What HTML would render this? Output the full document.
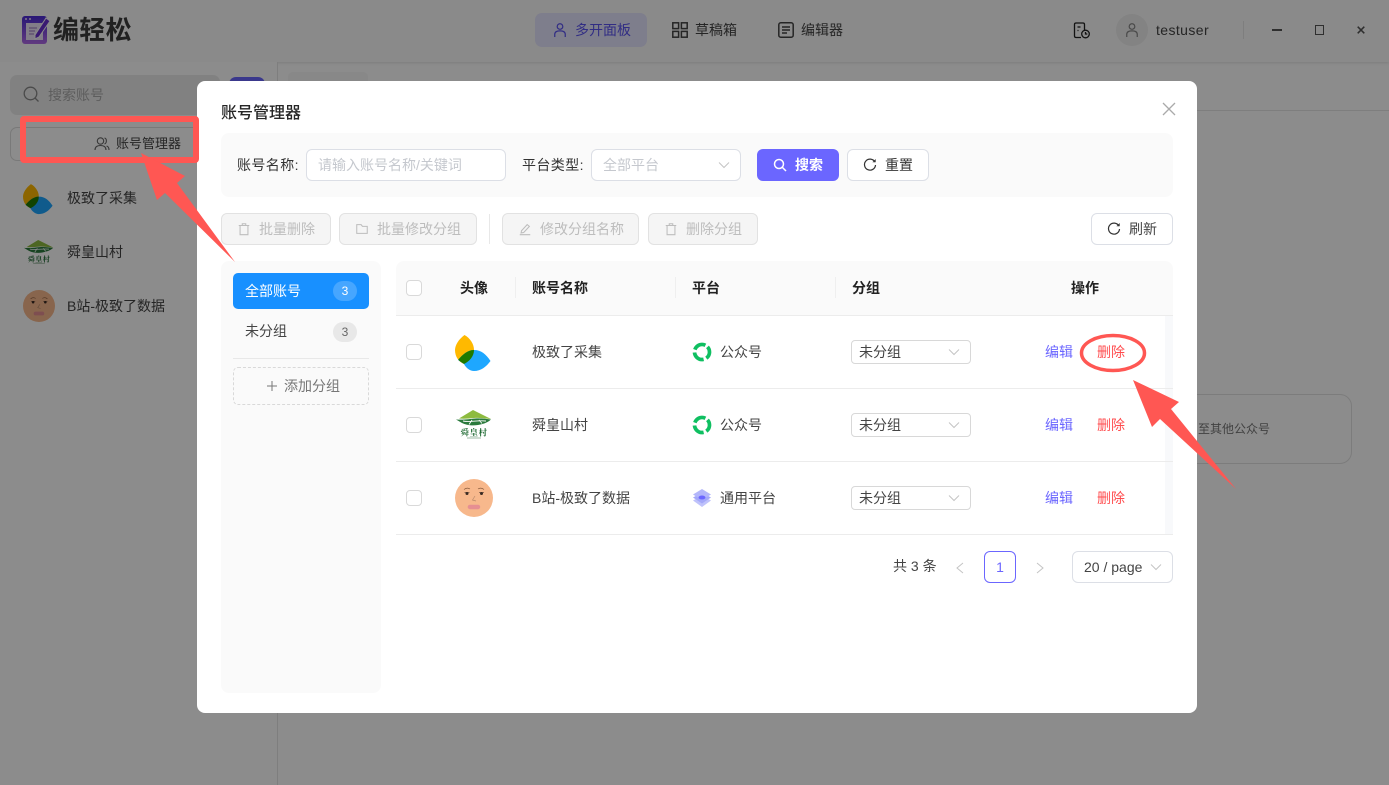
<!DOCTYPE html>
<html lang="zh"><head><meta charset="utf-8"><title>账号管理器</title>
<style>
*{box-sizing:border-box}
html,body{margin:0;padding:0;width:1389px;height:785px;overflow:hidden;background:#fff;font-family:"Liberation Sans","Noto Sans CJK SC",sans-serif;font-size:14px;color:#333}
.a,.t,svg.a{position:absolute}
.t{white-space:nowrap;line-height:20px}
.b{position:absolute;border:1px solid #dcdfe6;border-radius:6px;background:#fff}
.dis{position:absolute;top:213px;height:32px;background:#f5f5f5;border:1px solid #e2e2e2;border-radius:6px}
.g{color:#bdbdbd}.ph{color:#c5c8ce}
.ln{position:absolute;left:396px;width:777px;height:1px;background:#ececec}
.chk{position:absolute;left:406px;width:16px;height:16px;border:1px solid #d9d9d9;border-radius:4px;background:#fff}
.th{font-weight:700;color:#222}
.vd{position:absolute;width:1px;height:21px;top:277px;background:#efefef}
.sel{position:absolute;left:851px;width:120px;height:24px;border:1px solid #d8d8d8;border-radius:4px;background:#fff}
</style></head><body>
<svg width="0" height="0" style="position:absolute"><defs>
<symbol id="leaf" viewBox="0 0 36 37">
<clipPath id="cy"><path d="M9.500 0C4 4 0 10 0 15C0 22 4 27 9 29C15 26 19 21 19 15C19 9 15 3 9.500 0Z"/></clipPath>
<path fill="#ffb900" d="M9.500 0C4 4 0 10 0 15C0 22 4 27 9 29C15 26 19 21 19 15C19 9 15 3 9.500 0Z"/>
<path fill="#1ea7ff" d="M3 25C8 19 13 15 19 15C26 15 31 19 35.500 26C31 32 26 36 19 36C15 36 11 33 9 29Z"/>
<path fill="#1f7a00" clip-path="url(#cy)" d="M3 25C8 19 13 15 19 15C26 15 31 19 35.500 26C31 32 26 36 19 36C15 36 11 33 9 29Z"/>
</symbol>
<symbol id="vil" viewBox="0 0 36 30">
<path fill="#8dbb3f" d="M17 0L27 5L35 9C28 8.500 22 7.500 18 8C13 8.500 8 9 3 8.500Z"/>
<path fill="#2a7a3c" d="M0 9.500C8 10 14 9 19 8.500C25 8 30 9 35 9.500C31 13 27 14 22 15C16 16 10 15 6 13Z"/>
<path stroke="#fff" stroke-width=".9" fill="none" d="M7 11C14 12.500 20 10 30 11M16 10L13 14.500M23 10L26 13.500"/>
<text x="18" y="25.500" text-anchor="middle" font-size="8.500" font-weight="700" letter-spacing=".5" fill="#1f6a33" font-family="Noto Serif CJK SC,serif">舜皇村</text>
<rect x="11" y="27.500" width="14" height="1" fill="#9db9a4"/>
</symbol>
<symbol id="face" viewBox="0 0 38 38">
<circle cx="19" cy="19" r="19" fill="#f7b88c"/>
<path d="M9 10.500Q12 8 15 10M23 10Q26 8 29 10.500" stroke="#8a5a3c" stroke-width=".7" fill="none"/>
<circle cx="12" cy="14.500" r="1.500" fill="#3a2a22"/><circle cx="26.500" cy="14.500" r="1.500" fill="#3a2a22"/>
<path d="M9.500 13.500H14.500M24 13.500H29" stroke="#3a2a22" stroke-width=".5"/>
<path d="M20 17L17.500 21L21 22" stroke="#b98a6c" stroke-width=".7" fill="none"/>
<rect x="12.700" y="25.700" width="12.500" height="4.500" rx="2.200" fill="#e68f92"/>
</symbol>
<symbol id="wx" viewBox="0 0 20 20">
<circle cx="10" cy="10" r="7.500" fill="none" stroke="#0fbf61" stroke-width="3.700" stroke-dasharray="12.800 2.900" transform="rotate(-43 10 10)"/>
</symbol>
<symbol id="gen" viewBox="0 0 20 20">
<path fill="#bfc2fb" d="M10 7.500L19 12.500L10 19L1 12.500Z"/><path fill="#a4a8f9" d="M10 4.500L19 9.500L10 15.500L1 9.500Z"/><path fill="#b3b6fa" d="M10 1L19 6.500L10 12L1 6.500Z"/><ellipse cx="10" cy="9.500" rx="3.500" ry="2" fill="#6b66ff"/>
</symbol>
<symbol id="trash" viewBox="0 0 16 16"><path fill="none" stroke="#bdbdbd" stroke-width="1.200" d="M2 4H14M6 4V2H10V4M3.500 4V14.500H12.500V4"/></symbol>
<symbol id="chev" viewBox="0 0 12 12"><path fill="none" stroke="#c4c4c4" stroke-width="1" d="M1 3.500L6 8.500L11 3.500"/></symbol>
<symbol id="ref" viewBox="0 0 16 16"><path fill="none" stroke="#333" stroke-width="1.400" d="M13.500 4.500A6.300 6.300 0 1 0 14.300 8"/><path fill="#333" d="M10.800 4.800H14.500V1.200Z"/></symbol>
</defs></svg>

<!-- underlying page -->
<div class="a" style="left:0;top:0;width:1389px;height:62px;background:#fbfbfb;box-shadow:0 1px 3px rgba(0,0,0,.12)"></div>
<div class="a" style="left:0;top:62px;width:278px;height:723px;background:#fff;border-right:1px solid #e5e5e5"></div>

<svg class="a" style="left:22px;top:15px" width="30" height="30" viewBox="0 0 30 30">
<defs><linearGradient id="lg" x1="0" y1="0" x2="0" y2="1"><stop offset="0" stop-color="#4c2bd6"/><stop offset="1" stop-color="#b06be8"/></linearGradient></defs>
<rect x="0" y="1" width="25" height="28" rx="3" fill="url(#lg)"/>
<circle cx="4" cy="4" r="1" fill="#e8def8"/><circle cx="8" cy="4" r="1" fill="#e8def8"/>
<rect x="4" y="8" width="17" height="17" fill="#ede4f8"/>
<path d="M7 13H15M7 16H13M7 19H12" stroke="#a98ac9" stroke-width="1.300"/>
<path d="M13 20L24 3L28 6L17 22L13 24Z" fill="#6a2fd0" stroke="#fbfbfb" stroke-width="1"/>
</svg>
<div class="t" style="left:53px;top:12px;font-size:26px;line-height:36px;font-weight:700;color:#3c3c3c;letter-spacing:.3px">编轻松</div>

<div class="a" style="left:535px;top:13px;width:112px;height:34px;border-radius:7px;background:#e6e5ff"></div>
<svg class="a" style="left:553px;top:22px" width="14" height="16" viewBox="0 0 16 18" fill="none" stroke="#5a53f0" stroke-width="1.400"><circle cx="8" cy="5" r="3.200"/><path d="M2 17V14C2 11 5 10 8 10S14 11 14 14V17"/></svg>
<div class="t" style="left:575px;top:20px;color:#5a53f0">多开面板</div>
<svg class="a" style="left:672px;top:22px" width="16" height="16" viewBox="0 0 16 16" fill="none" stroke="#444" stroke-width="1.500"><rect x=".8" y=".8" width="5.800" height="5.800"/><rect x="9.400" y=".8" width="5.800" height="5.800"/><rect x=".8" y="9.400" width="5.800" height="5.800"/><rect x="9.400" y="9.400" width="5.800" height="5.800"/></svg>
<div class="t" style="left:695px;top:20px;color:#444">草稿箱</div>
<svg class="a" style="left:778px;top:22px" width="16" height="16" viewBox="0 0 16 16" fill="none" stroke="#444" stroke-width="1.500"><rect x=".8" y=".8" width="14.400" height="14.400" rx="2"/><path d="M4 5H12M4 8H12M4 11H9"/></svg>
<div class="t" style="left:801px;top:20px;color:#444">编辑器</div>
<svg class="a" style="left:1073px;top:22px" width="18" height="17" viewBox="0 0 18 17" fill="none" stroke="#222" stroke-width="1.300"><path d="M8 15.500H3Q1.500 15.500 1.500 14V2.500Q1.500 1 3 1H10Q11.500 1 11.500 2.500V8"/><path d="M4.500 5H7.500M4.500 8.500H5.500"/><circle cx="12.500" cy="12" r="3.800"/><path d="M12.500 10V12H14.300"/></svg>
<div class="a" style="left:1116px;top:14px;width:32px;height:32px;border-radius:50%;background:#eee"></div>
<svg class="a" style="left:1125px;top:22px" width="14" height="16" viewBox="0 0 16 18" fill="none" stroke="#888" stroke-width="1.400"><circle cx="8" cy="5" r="3.200"/><path d="M2 17V14C2 11 5 10 8 10S14 11 14 14V17"/></svg>
<div class="t" style="left:1156px;top:20px;color:#444;letter-spacing:.4px">testuser</div>
<div class="a" style="left:1243px;top:21px;width:1px;height:18px;background:#e5e5e5"></div>
<div class="a" style="left:1272px;top:29px;width:10px;height:2px;background:#555"></div>
<div class="a" style="left:1315px;top:25px;width:9px;height:10px;border:1.500px solid #555"></div>
<svg class="a" style="left:1357px;top:26px" width="8" height="8" fill="none" stroke="#555" stroke-width="1.500"><path d="M.7 .7L7.300 7.300M7.300 .7L.7 7.300"/></svg>

<div class="a" style="left:10px;top:75px;width:210px;height:40px;border-radius:7px;background:#ececec"></div>
<svg class="a" style="left:23px;top:86px" width="17" height="17" fill="none" stroke="#888" stroke-width="1.300"><circle cx="7.500" cy="7.500" r="6.300"/><path d="M12 12L15.500 15.500"/></svg>
<div class="t" style="left:48px;top:85px;color:#aaa">搜索账号</div>
<div class="a" style="left:229px;top:77px;width:36px;height:36px;border-radius:7px;background:#6b66ff"></div>
<div class="a" style="left:10px;top:127px;width:200px;height:34px;border:1px solid #ddd;border-radius:7px;background:#fff"></div>
<svg class="a" style="left:94px;top:136px" width="16" height="16" fill="none" stroke="#666" stroke-width="1.100"><circle cx="6.500" cy="5" r="3.200"/><path d="M1 14C1 10 4 9.500 6.500 9.500S12 10 12 14M10.500 2C13 2.500 13 7 10.500 8M12.500 10C14.500 10.500 15 12 15 14"/></svg>
<div class="t" style="left:116px;top:134px;font-size:13px;color:#444">账号管理器</div>
<svg class="a" style="left:23px;top:184px" width="30" height="31"><use href="#leaf"/></svg>
<div class="t" style="left:67px;top:188px;color:#444">极致了采集</div>
<svg class="a" style="left:24px;top:240px" width="30" height="25"><use href="#vil"/></svg>
<div class="t" style="left:67px;top:242px;color:#444">舜皇山村</div>
<svg class="a" style="left:23px;top:290px" width="32" height="32"><use href="#face"/></svg>
<div class="t" style="left:67px;top:296px;color:#444">B站-极致了数据</div>
<div class="a" style="left:288px;top:72px;width:80px;height:30px;background:#f7f7f7;border-radius:5px"></div>
<div class="a" style="left:278px;top:110px;width:1111px;height:1px;background:#e6e6e6"></div>
<div class="a" style="left:1040px;top:394px;width:312px;height:70px;border:1px solid #e2e2e2;border-radius:12px;background:#fff"></div>
<div class="t" style="left:1198px;top:419px;font-size:12px;color:#777">至其他公众号</div>

<!-- mask -->
<div class="a" style="left:0;top:0;width:1389px;height:785px;background:rgba(0,0,0,.45)"></div>

<!-- modal -->
<div class="a" style="left:197px;top:81px;width:1000px;height:632px;background:#fff;border-radius:8px"></div>
<div class="t" style="left:221px;top:103px;font-size:16px;line-height:22px;font-weight:500;color:#262626">账号管理器</div>
<svg class="a" style="left:1162px;top:102px" width="14" height="14" fill="none" stroke="#aaa" stroke-width="1.300"><path d="M1 1L13 13M13 1L1 13"/></svg>

<div class="a" style="left:221px;top:133px;width:952px;height:64px;background:#fafafa;border-radius:8px"></div>
<div class="t" style="left:237px;top:155px;letter-spacing:.4px">账号名称:</div>
<div class="b" style="left:306px;top:149px;width:200px;height:32px"></div>
<div class="t ph" style="left:318px;top:155px">请输入账号名称/关键词</div>
<div class="t" style="left:522px;top:155px;letter-spacing:.4px">平台类型:</div>
<div class="b" style="left:591px;top:149px;width:150px;height:32px"></div>
<div class="t ph" style="left:603px;top:155px">全部平台</div>
<svg class="a" style="left:718px;top:159px" width="12" height="12"><use href="#chev"/></svg>
<div class="a" style="left:757px;top:149px;width:82px;height:32px;background:#6b66ff;border-radius:6px"></div>
<svg class="a" style="left:773px;top:158px" width="14" height="14" fill="none" stroke="#fff" stroke-width="1.500"><circle cx="6" cy="6" r="4.500"/><path d="M9.500 9.500L13 13"/></svg>
<div class="t" style="left:795px;top:155px;color:#fff;font-weight:700">搜索</div>
<div class="b" style="left:847px;top:149px;width:82px;height:32px"></div>
<svg class="a" style="left:863px;top:158px" width="14" height="14"><use href="#ref"/></svg>
<div class="t" style="left:885px;top:155px">重置</div>

<div class="dis" style="left:221px;width:110px"></div>
<svg class="a" style="left:237px;top:222px" width="14" height="14"><use href="#trash"/></svg>
<div class="t g" style="left:259px;top:219px">批量删除</div>
<div class="dis" style="left:339px;width:138px"></div>
<svg class="a" style="left:355px;top:222px" width="14" height="14" viewBox="0 0 16 16" fill="none" stroke="#bdbdbd" stroke-width="1.200"><path d="M2 3H7L8.500 5H14V13H2Z"/></svg>
<div class="t g" style="left:377px;top:219px">批量修改分组</div>
<div class="a" style="left:489px;top:214px;width:1px;height:30px;background:#e8e8e8"></div>
<div class="dis" style="left:502px;width:137px"></div>
<svg class="a" style="left:518px;top:222px" width="14" height="14" viewBox="0 0 16 16" fill="none" stroke="#bdbdbd" stroke-width="1.200"><path d="M4 10L10.500 3L13 5L6.500 12L3.500 12.500ZM2 14.500H14"/></svg>
<div class="t g" style="left:540px;top:219px">修改分组名称</div>
<div class="dis" style="left:648px;width:110px"></div>
<svg class="a" style="left:664px;top:222px" width="14" height="14"><use href="#trash"/></svg>
<div class="t g" style="left:686px;top:219px">删除分组</div>
<div class="b" style="left:1091px;top:213px;width:82px;height:32px"></div>
<svg class="a" style="left:1107px;top:222px" width="14" height="14"><use href="#ref"/></svg>
<div class="t" style="left:1129px;top:219px;color:#444">刷新</div>

<!-- groups -->
<div class="a" style="left:221px;top:261px;width:160px;height:432px;background:#fafafa;border-radius:8px"></div>
<div class="a" style="left:233px;top:273px;width:136px;height:36px;background:#1890ff;border-radius:5px"></div>
<div class="t" style="left:245px;top:281px;color:#fff">全部账号</div>
<div class="a" style="left:333px;top:281px;width:24px;height:20px;border-radius:10px;background:#46a6ff;color:#fff;font-size:12px;text-align:center;line-height:20px">3</div>
<div class="t" style="left:245px;top:321px;color:#444">未分组</div>
<div class="a" style="left:333px;top:322px;width:24px;height:20px;border-radius:10px;background:#e8e8e8;color:#666;font-size:12px;text-align:center;line-height:20px">3</div>
<div class="a" style="left:233px;top:358px;width:136px;height:1px;background:#e8e8e8"></div>
<div class="a" style="left:233px;top:367px;width:136px;height:38px;border:1px dashed #d9d9d9;border-radius:5px"></div>
<svg class="a" style="left:266px;top:380px" width="12" height="12" stroke="#777" stroke-width="1"><path d="M6 1V11M1 6H11"/></svg>
<div class="t" style="left:284px;top:376px;color:#777">添加分组</div>

<!-- table -->
<div class="a" style="left:396px;top:261px;width:777px;height:54px;background:#fafafa;border-radius:8px 8px 0 0"></div>
<div class="a" style="left:1165px;top:316px;width:8px;height:218px;background:#f8f9fb"></div>
<div class="ln" style="top:315px"></div><div class="ln" style="top:388px"></div><div class="ln" style="top:461px"></div><div class="ln" style="top:534px"></div>
<div class="chk" style="top:280px"></div>
<div class="t th" style="left:460px;top:278px">头像</div>
<div class="vd" style="left:515px"></div>
<div class="t th" style="left:532px;top:278px">账号名称</div>
<div class="vd" style="left:675px"></div>
<div class="t th" style="left:692px;top:278px">平台</div>
<div class="vd" style="left:835px"></div>
<div class="t th" style="left:852px;top:278px">分组</div>
<div class="t th" style="left:1071px;top:278px">操作</div>

<div class="chk" style="top:344px"></div>
<svg class="a" style="left:455px;top:335px" width="36" height="37"><use href="#leaf"/></svg>
<div class="t" style="left:532px;top:342px;color:#444">极致了采集</div>
<svg class="a" style="left:692px;top:342px" width="20" height="20"><use href="#wx"/></svg>
<div class="t" style="left:720px;top:342px;color:#444">公众号</div>
<div class="sel" style="top:340px"></div>
<div class="t" style="left:859px;top:342px;color:#444">未分组</div>
<svg class="a" style="left:948px;top:346px" width="12" height="12"><use href="#chev"/></svg>
<div class="t" style="left:1045px;top:342px;color:#6b66ff">编辑</div>
<div class="t" style="left:1097px;top:342px;color:#ff4d4f">删除</div>

<div class="chk" style="top:417px"></div>
<svg class="a" style="left:456px;top:410px" width="36" height="30"><use href="#vil"/></svg>
<div class="t" style="left:532px;top:415px;color:#444">舜皇山村</div>
<svg class="a" style="left:692px;top:415px" width="20" height="20"><use href="#wx"/></svg>
<div class="t" style="left:720px;top:415px;color:#444">公众号</div>
<div class="sel" style="top:413px"></div>
<div class="t" style="left:859px;top:415px;color:#444">未分组</div>
<svg class="a" style="left:948px;top:419px" width="12" height="12"><use href="#chev"/></svg>
<div class="t" style="left:1045px;top:415px;color:#6b66ff">编辑</div>
<div class="t" style="left:1097px;top:415px;color:#ff4d4f">删除</div>

<div class="chk" style="top:490px"></div>
<svg class="a" style="left:455px;top:479px" width="38" height="38"><use href="#face"/></svg>
<div class="t" style="left:532px;top:488px;color:#444">B站-极致了数据</div>
<svg class="a" style="left:692px;top:488px" width="20" height="20"><use href="#gen"/></svg>
<div class="t" style="left:720px;top:488px;color:#444">通用平台</div>
<div class="sel" style="top:486px"></div>
<div class="t" style="left:859px;top:488px;color:#444">未分组</div>
<svg class="a" style="left:948px;top:492px" width="12" height="12"><use href="#chev"/></svg>
<div class="t" style="left:1045px;top:488px;color:#6b66ff">编辑</div>
<div class="t" style="left:1097px;top:488px;color:#ff4d4f">删除</div>

<!-- pagination -->
<div class="t" style="left:893px;top:556px;color:#444">共 3 条</div>
<svg class="a" style="left:954px;top:561px" width="12" height="14" fill="none" stroke="#c4c4c4" stroke-width="1"><path d="M9 2L3 7L9 12"/></svg>
<div class="a" style="left:984px;top:551px;width:32px;height:32px;border:1px solid #6b66ff;border-radius:6px;color:#6b66ff;text-align:center;line-height:30px">1</div>
<svg class="a" style="left:1034px;top:561px" width="12" height="14" fill="none" stroke="#c4c4c4" stroke-width="1"><path d="M3 2L9 7L3 12"/></svg>
<div class="b" style="left:1072px;top:551px;width:101px;height:32px"></div>
<div class="t" style="left:1084px;top:557px;color:#444">20 / page</div>
<svg class="a" style="left:1150px;top:561px" width="12" height="12"><use href="#chev"/></svg>

<!-- annotations -->
<svg class="a" style="left:0;top:0" width="1389" height="785">
<rect x="23" y="119" width="173" height="41" fill="none" stroke="#ff5753" stroke-width="6" rx="1"/>
<polygon fill="#ff5753" points="141,153 185,176 177,183 235,262 165,193 157,200"/>
<ellipse cx="1113" cy="353" rx="31.500" ry="17.500" fill="none" stroke="#ff5753" stroke-width="3.500"/>
<polygon fill="#ff5753" points="1133,380 1179,402 1171,409 1236,489 1160,419 1152,427"/>
</svg>
</body></html>
